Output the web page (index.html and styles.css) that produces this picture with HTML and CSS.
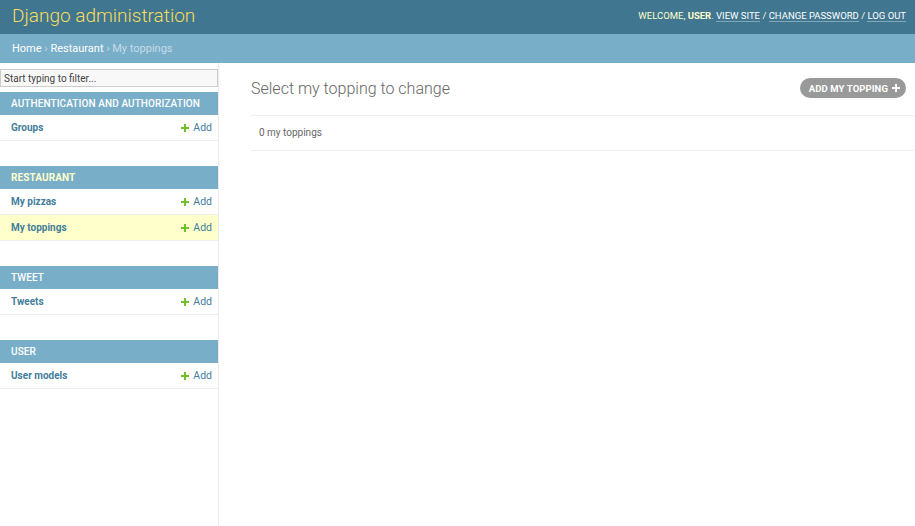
FILE: index.html
```html
<!DOCTYPE html>
<html lang="en">

<head>
    <meta charset="UTF-8">
    <meta name="viewport" content="width=device-width, initial-scale=1.0">
    <title>Select my topping to change | Django site admin</title>
    <link rel="stylesheet" href="styles.css">
</head>

<body>

    <!-- Header -->
    <div class="header">
        <div class="branding">Django administration</div>
        <div class="user-tools">
            Welcome, <strong>user</strong>.
            <a href="#">View site</a> /
            <a href="#">Change password</a> /
            <a href="#">Log out</a>
        </div>
    </div>

    <!-- Breadcrumbs -->
    <div class="breadcrumbs">
        <a href="#">Home</a> &rsaquo; <a href="#">Restaurant</a> &rsaquo; My toppings
    </div>

    <div class="main">
        <!-- Sidebar -->
        <div class="nav-sidebar">
            <input type="search" class="nav-filter" placeholder="Start typing to filter...">

            <div class="module">
                <div class="caption">Authentication and Authorization</div>
                <div class="model-row">
                    <a href="#" class="model-name">Groups</a>
                    <a href="#" class="addlink"><span class="plus"></span>Add</a>
                </div>
            </div>

            <div class="module current-app">
                <div class="caption">Restaurant</div>
                <div class="model-row">
                    <a href="#" class="model-name">My pizzas</a>
                    <a href="#" class="addlink"><span class="plus"></span>Add</a>
                </div>
                <div class="model-row current-model">
                    <a href="#" class="model-name">My toppings</a>
                    <a href="#" class="addlink"><span class="plus"></span>Add</a>
                </div>
            </div>

            <div class="module">
                <div class="caption">Tweet</div>
                <div class="model-row">
                    <a href="#" class="model-name">Tweets</a>
                    <a href="#" class="addlink"><span class="plus"></span>Add</a>
                </div>
            </div>

            <div class="module">
                <div class="caption">User</div>
                <div class="model-row">
                    <a href="#" class="model-name">User models</a>
                    <a href="#" class="addlink"><span class="plus"></span>Add</a>
                </div>
            </div>
        </div>

        <!-- Content -->
        <div class="content">
            <div class="content-header">
                <h1>Select my topping to change</h1>
                <a href="#" class="object-tool">Add my topping <span class="plus white"></span></a>
            </div>

            <div class="changelist">
                <p class="paginator">0 my toppings</p>
            </div>
        </div>
    </div>

</body>

</html>
```

FILE: styles.css
```css
/* Global Styles */
body {
    margin: 0;
    font-family: Roboto, 'Liberation Sans', sans-serif;
    color: #333;
    background-color: #fff;
    height: 526px;
    display: flex;
    flex-direction: column;
    overflow: hidden;
}

a {
    text-decoration: none;
}

/* Header */
.header {
    height: 34px;
    background-color: #417690;
    display: flex;
    align-items: center;
    justify-content: space-between;
    padding: 0 9px 0 12px;
    flex-shrink: 0;
}

.branding {
    color: #f5dd5d;
    font-size: 19px;
    font-weight: 300;
    margin-top: -4px;
}

.user-tools {
    color: #ffc;
    font-size: 9.5px;
    text-transform: uppercase;
    margin-top: -3px;
}

.user-tools strong {
    font-weight: bold;
}

.user-tools a {
    color: #fff;
    border-bottom: 1px solid rgba(255, 255, 255, 0.35);
}

/* Breadcrumbs */
.breadcrumbs {
    height: 29px;
    line-height: 29px;
    background-color: #79aec8;
    color: #c4dce8;
    padding: 0 12px;
    font-size: 11px;
    flex-shrink: 0;
}

.breadcrumbs a {
    color: #fff;
}

/* Layout */
.main {
    display: flex;
    flex: 1;
}

/* Sidebar */
.nav-sidebar {
    width: 218px;
    flex-shrink: 0;
    border-right: 1px solid #eaeaea;
}

.nav-filter {
    display: block;
    box-sizing: border-box;
    width: 100%;
    height: 18px;
    margin: 6px 0 5px;
    padding: 0 3px;
    border: 1px solid #ccc;
    background-color: #f8f8f8;
    font-family: Roboto, 'Liberation Sans', sans-serif;
    font-size: 10px;
    color: #333;
    outline: none;
}

.nav-filter::placeholder {
    color: #444;
}

.module {
    margin-bottom: 25px;
}

.caption {
    height: 23px;
    line-height: 24px;
    background-color: #79aec8;
    color: #fff;
    padding: 0 11px;
    font-size: 10px;
    font-weight: 500;
    letter-spacing: 0.1px;
    text-transform: uppercase;
    white-space: nowrap;
}

.current-app .caption {
    color: #ffc;
    font-weight: bold;
}

.model-row {
    height: 25px;
    display: flex;
    align-items: center;
    justify-content: space-between;
    padding: 0 6px 0 11px;
    border-bottom: 1px solid #eee;
    font-size: 10px;
}

.current-model {
    background-color: #ffc;
}

.model-name {
    color: #447e9b;
    font-weight: bold;
}

.addlink {
    color: #447e9b;
    display: flex;
    align-items: center;
    font-size: 10.5px;
}

/* Plus icon */
.plus {
    display: inline-block;
    width: 8px;
    height: 8px;
    margin-right: 4px;
    background:
        linear-gradient(#70bf2b, #70bf2b) center / 8px 2px no-repeat,
        linear-gradient(#70bf2b, #70bf2b) center / 2px 8px no-repeat;
}

.plus.white {
    margin: 0 0 0 4px;
    background:
        linear-gradient(#fff, #fff) center / 8px 2px no-repeat,
        linear-gradient(#fff, #fff) center / 2px 8px no-repeat;
}

/* Content */
.content {
    flex: 1;
    padding: 15px 1px 0 32px;
}

.content-header {
    height: 20px;
    display: flex;
    align-items: center;
    justify-content: space-between;
    padding-right: 8px;
}

h1 {
    margin: 0;
    font-size: 16px;
    font-weight: 300;
    color: #666;
}

.object-tool {
    display: flex;
    align-items: center;
    height: 20px;
    padding: 0 6px 0 9px;
    border-radius: 10px;
    background-color: #999;
    color: #fff;
    font-size: 9.5px;
    font-weight: bold;
    letter-spacing: 0.1px;
    text-transform: uppercase;
}

.changelist {
    margin-top: 17px;
    border-top: 1px solid #eee;
    border-bottom: 1px solid #eee;
}

.paginator {
    margin: 0;
    height: 34px;
    line-height: 34px;
    padding-left: 8px;
    font-size: 10px;
    color: #666;
}
```
